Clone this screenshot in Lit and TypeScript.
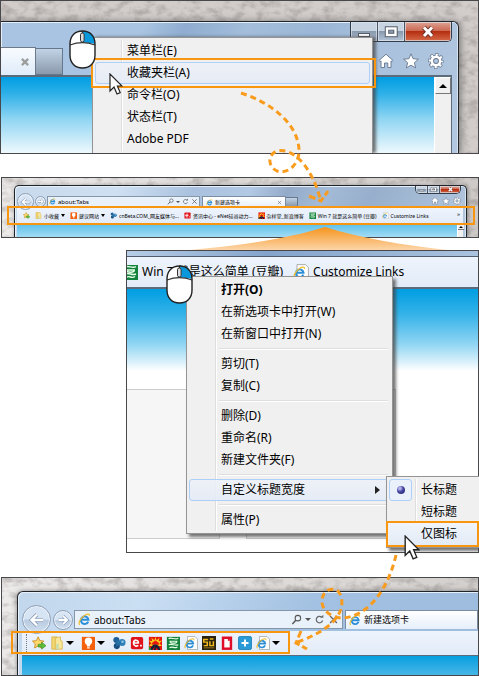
import { LitElement, html, svg, css } from "lit";
import { customElement } from "lit/decorators.js";

const mouse = (cls: string) => html`
  <svg class="mouse ${cls}" viewBox="0 0 27 39" aria-hidden="true">
    <path d="M1 14C1 6 6 1 13.500 1S26 6 26 14v11c0 8-5 13-12.500 13S1 33 1 25Z" fill="#fff"/>
    <path d="M13.500 1C21 1 26 6 26 14c-4-1-8-1.500-12.500-1.500Z" fill="#0a98dc"/>
    <path d="M1 15c8-3 17-3 25 0M13.500 1v3" fill="none" stroke="#333" stroke-width="1.200"/>
    <path d="M1 14C1 6 6 1 13.500 1S26 6 26 14v11c0 8-5 13-12.500 13S1 33 1 25Z" fill="none" stroke="#222" stroke-width="1.400"/>
    <rect x="11.500" y="3" width="3.600" height="9" rx="1.800" fill="#ddd" stroke="#333"/>
  </svg>`;

const cursor = (cls: string) => html`
  <svg class="cursor ${cls}" viewBox="0 0 14 22" aria-hidden="true">
    <path d="M1 1v17l4-4 3 7 3.200-1.400L8.400 13H13Z" fill="#fff" stroke="#222" stroke-width="1.200"/>
  </svg>`;

const eShape = svg`
  <path d="M12.600 10.600A4.700 4.700 0 1 1 12.900 8.300H4.500" fill="none" stroke="#2d8fd8" stroke-width="2.400"/>
  <path d="M2.500 14.300C-.8 13.500 3.500 5.500 8 3c3.500-2.300 6.500-2 5.800.5" fill="none" stroke="#f0bd2c" stroke-width="1.500"/>`;

const shapes: Record<string, unknown> = {
  star: svg`<path d="M7 1l2 4.300 4.600.5-3.400 3.200.9 4.700L7 11.400 2.900 13.700l.9-4.700L.5 5.800 5 5.300Z" fill="#ffd86b" stroke="#c98b1c"/>
    <path d="M7 9.500h4V7l5 4-5 4v-2.500H7Z" fill="#5cbf3a" stroke="#3a8a26" stroke-width=".7"/>`,
  folder: svg`<path d="M2 1h6v14H2Z" fill="#f3d671" stroke="#d2ac3c" stroke-width=".8"/>
    <path d="M6 2l6-1v4l2 1v9H6Z" fill="#fae698" stroke="#d2ac3c" stroke-width=".8"/><path d="M7 9h3v6H7Z" fill="#c8dcae"/>`,
  bulb: svg`<rect x="1" y="1" width="15" height="15" fill="#f4600c"/><circle cx="8.500" cy="6" r="4.200" fill="#fff"/>
    <path d="M6 8h5l-1 4H7ZM7 12.800h3v1.600H7Z" fill="#fff"/>`,
  beta: svg`<circle cx="5" cy="4.500" r="3.500" fill="#1d5f96"/><circle cx="11.500" cy="7.500" r="4" fill="#2f7fb8"/>
    <circle cx="5.500" cy="11.500" r="3.500" fill="#184f80"/><path d="M5 4l6 4-6 4Z" fill="#2772a8"/>
    <circle cx="12" cy="6.500" r="1.500" fill="#8cc3e6"/>`,
  enet: svg`<rect x="1" y="1" width="14" height="14" rx="2" fill="#e0121b"/>
    <path d="M4 8h5.500c.5-4-5.200-4.500-5.500 0 0 4 4 4 5.500 2.800" fill="none" stroke="#fff" stroke-width="1.900"/><path d="M11.500 10h2v2h-2Z" fill="#fff"/>`,
  flower: svg`<rect x="1" y="1" width="15" height="15" fill="#e7180f"/>
    <path d="M8.500 1l1.300 4L13 2l-.8 4L16 5l-3 3.500 3 2.500-4 .5H5L1 11l3-2.500L1 5l3.800 1L4 2l3.200 3Z" fill="#ffd21c"/>
    <path d="M8.500 5l3 2 1.500 3H4l1.500-3Z" fill="#e7180f"/>
    <path d="M3 16c0-8 10-9 11 0h-2.500l-1.500-3-1.500 3H7l.5-4-2.500 4Z" fill="#15203a"/><path d="M1 11l3 5H1Z" fill="#1b9b3a"/>`,
  douban: svg`<rect x="1" y="1" width="15" height="15" fill="#12813a"/>
    <path d="M3 3c3-2 8 2 11-.5M4 6h9M5 6c-2 3 9 3 7 0M3 10c4-2 7 2 11 0M4 13.500c4-3 5 2 9-1" fill="none" stroke="#e9ffe9" stroke-width="1.400"/>`,
  page: svg`<path d="M4 .6h8.500L15.400 3.500v12H4Z" fill="#fff" stroke="#999" stroke-width=".8"/>
    <g transform="translate(0 2) scale(.82)">${eShape}</g>`,
  ie: eShape,
  su: svg`<rect x="0" y="0" width="16" height="16" fill="#2a2310"/>
    <path d="M7 4H2v3h4v4H2M9 6v5h4V6M9 3.500h4" fill="none" stroke="#f0b81c" stroke-width="1.700"/><path d="M2 13.500h12" stroke="#a67c17"/>`,
  red: svg`<rect x="3.500" y="2" width="9" height="12.500" fill="#fff" stroke="#df0d27" stroke-width="2.800"/><path d="M9 3.300h2.200v2.200H9Z" fill="#df0d27"/>`,
  plus: svg`<rect x=".5" y=".5" width="15" height="15" rx="2" fill="#2a9bd6" stroke="#1b7fb5"/><path d="M8 4v8M4 8h8" stroke="#fff" stroke-width="2.200"/>`,
  home: svg`<path d="M8 1.200l7 6.300-1 1.200-1-.8V14.500H9.800V10H6.500v4.500H3V7.900l-1 .8L1 7.500Z" fill="#fff" stroke="#65758c" stroke-width=".9"/>`,
  fav: svg`<path d="M8 .8l2.100 4.900 5.300.5-4 3.500 1.200 5.200L8 12.200l-4.600 2.700 1.200-5.200-4-3.500 5.300-.5Z" fill="#fff" stroke="#65758c" stroke-width=".9"/>`,
  gear: svg`<circle cx="8" cy="8" r="6.300" fill="none" stroke="#65758c" stroke-width="3.400" stroke-dasharray="3 1.948" stroke-dashoffset="1.500"/>
    <circle cx="8" cy="8" r="4.200" fill="none" stroke="#65758c" stroke-width="4.200"/>
    <circle cx="8" cy="8" r="6" fill="none" stroke="#fff" stroke-width="2.600" stroke-dasharray="2 2.712" stroke-dashoffset="1"/>
    <circle cx="8" cy="8" r="4.200" fill="none" stroke="#fff" stroke-width="2.600"/>`,
  search: svg`<circle cx="10" cy="6" r="4" fill="none" stroke="#555" stroke-width="1.500"/><path d="M7 9l-5 5.500" stroke="#555" stroke-width="2"/>`,
  reload: svg`<path d="M12.500 9.500a4.700 4.700 0 1 1-1.500-5" fill="none" stroke="#666" stroke-width="1.700"/><path d="M9 5.500h4.500V1Z" fill="#666"/>`,
  cross: svg`<path d="M3 3l10 10M13 3L3 13" stroke="#666" stroke-width="1.900"/>`,
  shut: svg`<path d="M3 3l10 10M13 3L3 13" stroke="#9c9c9c" stroke-width="3.600"/>`,
  back: svg`<path d="M14 8H3M8 2.500L2.500 8 8 13.500" fill="none" stroke="#8ba0bb" stroke-width="4"/>
    <path d="M14 8H3M8 2.500L2.500 8 8 13.500" fill="none" stroke="#fff" stroke-width="2.400"/>`,
  next: svg`<path d="M2 8h11M8 2.500L13.500 8 8 13.500" fill="none" stroke="#8ba0bb" stroke-width="4"/>
    <path d="M2 8h11M8 2.500L13.500 8 8 13.500" fill="none" stroke="#fff" stroke-width="2.400"/>`,
  min: svg`<rect x="2.500" y="9.500" width="11" height="3" fill="#fff" stroke="#555d69"/>`,
  max: svg`<rect x="4" y="4.500" width="8.500" height="6.500" fill="none" stroke="#555d69" stroke-width="4.400"/><rect x="4" y="4.500" width="8.500" height="6.500" fill="none" stroke="#fff" stroke-width="2.400"/>`,
  close: svg`<path d="M4 3.500l8 8.500M12 3.500L4 12" stroke="#6b3029" stroke-width="4.800"/><path d="M4 3.500l8 8.500M12 3.500L4 12" stroke="#fff" stroke-width="3"/>`,
};

const icon = (name: string, cls = "") => html`<svg class="icon ${cls}" viewBox="0 0 16 16" aria-hidden="true">${shapes[name]}</svg>`;
const caret = html`<i class="caret"></i>`;

const wall = (seed: number) => html`
  <svg class="wall" aria-hidden="true">
    <filter id="grain${seed}" x="0" y="0" width="100%" height="100%" color-interpolation-filters="sRGB">
      <feTurbulence type="fractalNoise" baseFrequency=".09 .14" numOctaves="4" seed="${seed}"/>
      <feColorMatrix values="0 0 0 0 .42  0 0 0 0 .39  0 0 0 0 .38  .8 0 0 0 -.34"/>
    </filter>
    <rect width="100%" height="100%" filter="url(#grain${seed})"/>
  </svg>`;

const captions = html`
  <div class="captions">
    <button aria-label="最小化">${icon("min")}</button><button aria-label="最大化">${icon("max")}</button><button class="shut" aria-label="关闭">${icon("close")}</button>
  </div>`;

const tools = html`
  <div class="tools">
    <button aria-label="主页">${icon("home")}</button><button aria-label="收藏夹">${icon("fav")}</button><button aria-label="工具">${icon("gear")}</button>
  </div>`;

const address = html`
  <button class="round" aria-label="后退">${icon("back")}</button>
  <button class="round small" aria-label="前进">${icon("next")}</button>
  <div class="address">
    ${icon("ie")}
    <input aria-label="地址" .value=${"about:Tabs"}>
    <button aria-label="搜索">${icon("search")}</button>${caret}
    <button aria-label="刷新">${icon("reload")}</button>
    <button aria-label="停止">${icon("cross")}</button>
  </div>`;

const links = [
  { icon: "star" },
  { icon: "folder", text: "小收藏", more: true },
  { icon: "bulb", text: "建议网站", more: true },
  { icon: "beta", text: "cnBeta.COM_网友媒体与..." },
  { icon: "enet", text: "资讯中心 - eNet硅谷动力..." },
  { icon: "flower", text: "杂样堂_新浪博客" },
  { icon: "douban", text: "Win 7 就是这么简单 (豆瓣)" },
  { icon: "page", text: "Customize Links" },
];

const compact = [
  { icon: "star" }, { icon: "folder", more: true }, { icon: "bulb", more: true }, { icon: "beta" }, { icon: "enet" },
  { icon: "flower" }, { icon: "douban" }, { icon: "page" }, { icon: "su" }, { icon: "red" }, { icon: "plus" }, { icon: "page", more: true },
];

const barMenu = ["菜单栏(E)", "收藏夹栏(A)", "命令栏(O)", "状态栏(T)", "Adobe PDF"];
const linkMenu = [
  ["打开(O)", "在新选项卡中打开(W)", "在新窗口中打开(N)"],
  ["剪切(T)", "复制(C)"],
  ["删除(D)", "重命名(R)", "新建文件夹(F)"],
  ["自定义标题宽度"],
  ["属性(P)"],
];

@customElement("app-root")
export class AppRoot extends LitElement {
  static styles = css`
    :host { display: block; position: relative; overflow: hidden; background: #fff; color: #000;
      font: 12px/22px "Noto Sans", "Noto Sans CJK SC", sans-serif; }
    * { box-sizing: border-box; }
    button, input { font: inherit; color: inherit; border: 0; padding: 0; margin: 0; background: none; min-width: 0; }
    a { color: inherit; text-decoration: none; }
    svg { display: block; flex: none; }
    .guide { display: flex; flex-direction: column; }
    .panel { position: relative; border: 1px solid #48484a; display: flex; flex-direction: column; background: #d2cdcb; }
    .crop { position: relative; flex: 1; min-height: 0; overflow: hidden; display: flex; flex-direction: column; }
    .wall { position: absolute; left: 0; top: 0; width: 100%; height: 100%; }
    .one { height: 154px; margin-bottom: 23px; }
    .two { height: 61px; margin: 0 0 12px 1px; background: linear-gradient(90deg, #eceae9, #d9d6d4 60%, #cecac8); }
    .three { height: 303px; margin: 0 0 24px 126px; background: #fff; }
    .four { height: 99px; margin-left: 1px; background: linear-gradient(90deg, #eceae9, #dddad8 60%, #d2cfcd); }

    .window { position: relative; flex: 1; display: flex; flex-direction: column; border: 1px solid #20242b; border-bottom: 0;
      box-shadow: inset 1px 1px #e6f0fa, inset -1px 0 #d5e2f0, 1px 1px 7px 1px #4449;
      background: linear-gradient(115deg, #a9c4e2 0, #a9c4e2 28%, #8fadd0 36%, #a3bddb 48%, #9bb6d6 62%, #a9c1dd 75%, #b3c8e0 100%); }
    .one .window { margin: 20px 19px 0 0; border-left: 0; border-radius: 0 6px 0 0; }
    .two .window { margin: 7px 11px 0 12px; border-radius: 5px 5px 0 0; padding: 0 3px 0 2px; box-shadow: inset 1px 1px #e6f0fa, inset -1px 0 #d5e2f0, 1px 1px 4px #4448;
      background: linear-gradient(115deg, #c9d9ec 0, #cfe0f2 22%, #a9c1de 38%, #b1c9e4 50%, #93abc9 58%, #a4bbd7 66%, #97afcc 76%, #b4c8df 100%); }
    .four .window { margin: 13px 0 0 15px; border-right: 0; border-radius: 6px 0 0 0; padding-left: 4px; box-shadow: inset 1px 1px #e6f0fa, 0 0 5px #4449;
      background: linear-gradient(115deg, #c2d6ec 0, #cbdff3 25%, #b9d2ec 40%, #a3c1e2 60%, #9dbbdc 100%); }

    .captions { position: absolute; top: 0; right: 6px; display: flex; border: 1px solid #333c49; border-top: 0; border-radius: 0 0 5px 5px; overflow: hidden; }
    .captions button { width: 27px; height: 19px; display: grid; place-items: center; border-right: 1px solid #4d5665;
      background: linear-gradient(#c9d4e2 45%, #8999ae 50%, #b5c5d8); box-shadow: inset 0 0 0 1px #dfe8f2aa; }
    .captions .shut { width: 46px; border: 0; background: linear-gradient(#dfa294 0, #cc6a54 45%, #b52e10 50%, #d56a49); }
    .two .captions { right: 5px; border-width: 0 1px 1px; }
    .two .captions button { width: 12px; height: 7px; }
    .two .captions .shut { width: 20px; }
    .icon { width: 16px; height: 16px; }
    .two .icon { width: 8px; height: 8px; }
    .two .captions .icon { width: 7px; height: 7px; }
    .tools { display: flex; gap: 9px; margin-left: auto; padding: 0 14px 6px 0; }
    .two .tools { gap: 3px; padding: 0 2px 2px 0; }

    .tabs { display: flex; align-items: flex-end; height: 53px; }
    .one .tab { width: 35px; height: 28px; border: 1px solid #6c7a8b; border-width: 1px 1px 0 0; background: linear-gradient(#f8fbfe, #dfecfa);
      display: grid; place-items: center end; padding-right: 5px; }
    .one .tab .icon { width: 10px; height: 10px; }
    .fresh { width: 27px; height: 27px; border: 1px solid #66788e; border-width: 1px 1px 1px 0; background: linear-gradient(#c2d3e6, #8a9aac); }
    .view { display: flex; flex: 1; border-top: 2px solid #5c6b7b; }
    .one .view { margin-right: 6px; border-right: 1px solid #5c6b7b; }
    .sky { flex: 1; background: linear-gradient(#009ee2 0, #2fb0e8 22%, #8fd5f3 55%, #fff 82px); }
    .scroll { width: 17px; background: #f0f0f0; border-left: 1px solid #fff; }
    .scroll button { display: grid; place-items: center; width: 16px; height: 17px; background: #f0f0f0; border: 1px solid; border-color: #fff #777 #777 #fff; }
    .scroll button::after { content: ""; border: 4px solid transparent; border-top: 0; border-bottom-color: #000; }
    .two .scroll { width: 6px; }
    .two .scroll button { width: 6px; height: 6px; border-width: 0 0 1px; }
    .two .scroll button::after { border-width: 0 2px 2px; }
    .two .view, .four .view { border-top-width: 1px; }
    .two .sky { background: linear-gradient(#5cc0ea, #a2dbf4); }
    .four .sky { background: linear-gradient(#079fe0, #48b6e7); }

    .nav { display: flex; align-items: center; height: 39px; padding-top: 16px; }
    .round { display: grid; place-items: center; flex: none; width: 29px; height: 29px; border: 1px solid #8da0b8; border-radius: 50%;
      background: linear-gradient(#d7e4f3 48%, #b9cbe0 52%, #d0dfef); box-shadow: inset 0 0 0 1px #eef5fc; position: relative; z-index: 1; }
    .round.small { width: 20px; height: 20px; margin: 0 1px 0 2px; }
    .round.small .icon { width: 12px; height: 12px; }
    .address { display: flex; align-items: center; width: 269px; height: 19px; border: 1px solid #8696a9; background: #e9f1fb; padding: 0 3px; gap: 3px; margin-right: 2px; }
    .address input { flex: 1; font-size: 10px; line-height: 16px; height: 16px; outline: 0; }
    .address .icon { width: 13px; height: 13px; }
    .address button .icon { width: 11px; height: 11px; }
    .pagetab { display: flex; align-items: center; gap: 3px; flex: 1; height: 19px; padding: 0 3px; border: 1px solid #7b8da3; border-bottom: 0;
      background: linear-gradient(#fff, #e6effa); font-size: 9px; line-height: 16px; }
    .pagetab .icon { width: 12px; height: 12px; }
    .caret { flex: none; width: 0; height: 0; border: 4px solid transparent; border-bottom: 0; border-top-color: #000; }
    .address .caret { border-width: 3px 3px 0; border-top-color: #555; }

    .two .nav { height: 22px; padding-top: 9px; }
    .two .round { width: 17px; height: 17px; }
    .two .round .icon { width: 10px; height: 10px; }
    .two .round.small { width: 11px; height: 11px; margin: 0 1px; }
    .two .round.small .icon { width: 7px; height: 7px; }
    .two .address { width: 153px; height: 11px; padding: 0 1px; gap: 2px; }
    .two .address input { font-size: 6px; line-height: 8px; height: 8px; }
    .two .address .icon { width: 7px; height: 7px; }
    .two .address .caret { border-width: 2px 2px 0; }
    .two .pagetab { flex: none; width: 84px; height: 11px; font-size: 5px; line-height: 9px; gap: 2px; }
    .two .pagetab .icon { width: 7px; height: 7px; }
    .two .pagetab button { margin-left: auto; }
    .two .pagetab button .icon { width: 5px; height: 5px; }
    .two .fresh { width: 12px; height: 10px; }

    .bar { display: flex; align-items: center; background: linear-gradient(#eef4fc, #e2ebf8); }
    .bar a { display: flex; align-items: center; white-space: nowrap; }
    .two .bar { height: 15px; padding-left: 6px; gap: 5px; font-size: 5px; line-height: 8px; }
    .two .bar a { gap: 2px; }
    .two .bar .icon { width: 7px; height: 7px; }
    .two .bar .caret { border-width: 3px 2px 0; }
    .two .bar .rest { margin: 0 3px 4px auto; font-size: 6px; }
    .three .bar { height: 31px; border-top: 1px solid #4e5d70; gap: 10px; overflow: hidden; }
    .three .bar a { gap: 4px; }
    .three .bar a:first-child { margin-left: -5px; }
    .four .bar { height: 24px; padding-left: 4px; }
    .four .bar .grip { height: 18px; border-left: 1px dotted #777; margin-right: 5px; }
    .four .bar .links { display: flex; gap: 4px; }
    .four .bar .icon { width: 14px; height: 14px; }
    .four .bar a.more { gap: 2px; margin-right: 3px; }

    .glass { height: 5px; background: linear-gradient(90deg, #b7cde6, #84a4cb 40%, #aac3df); }
    .three .view { flex: none; height: 102px; }
    .three .sky { background: linear-gradient(#009ee2 0, #34b2e8 25%, #8fd5f3 55%, #fff 82px); }
    .boxes { display: flex; gap: 26px; height: 150px; margin-left: -1px; }
    .boxes div { width: 94px; border: 1px solid #ccc; background: #f6f6f6; }
    .boxes div + div { width: 150px; }

    .menu { position: absolute; border: 1px solid #949494; background: #f0f0f0; padding: 2px; box-shadow: 3px 3px 3px #444b; z-index: 2; }
    .menu::before { content: ""; position: absolute; top: 2px; bottom: 2px; left: 28px; border-left: 1px solid #dedede; border-right: 1px solid #fff; }
    .menu button { position: relative; display: flex; align-items: center; width: 100%; height: 22px; padding-left: 31px; border: 1px solid transparent; border-radius: 3px; white-space: nowrap; text-align: left; }
    .menu .hot { border-color: #aecff7; background: linear-gradient(#edf1f8dd, #e4ebf6dd); }
    .menu hr { height: 2px; margin: 3px 2px 3px 30px; border: 0; border-top: 1px solid #dedede; border-bottom: 1px solid #fff; }
    .bars { left: 91px; right: 105px; top: 36px; bottom: 0; border-bottom: 0; box-shadow: 3px 0 3px #444b; }
    .context { left: 59px; top: 25px; width: 207px; }
    .context .lead { font-weight: 700; }
    .context .hot::after { content: ""; margin-left: auto; margin-right: 9px; border: 4px solid transparent; border-right: 0; border-left: 5px solid #222; }
    .sub { left: 259px; right: -1px; top: 225px; border-right: 0; z-index: 3; padding-right: 0; }
    .sub label { position: relative; display: flex; align-items: center; gap: 9px; height: 22px; padding-right: 2px; }
    .sub input { appearance: none; width: 23px; height: 22px; border: 1px solid transparent; border-radius: 3px; display: grid; place-items: center; }
    .sub input:checked { border-color: #aecff7; background: #eaf1fb; }
    .sub input:checked::after { content: ""; width: 8px; height: 8px; border-radius: 50%; background: radial-gradient(circle at 35% 30%, #b9b9ee 10%, #4545a0 45%, #22226a); }
    .sub .pick { background: linear-gradient(#f1f5fb, #e2eaf6); }

    .ring { position: absolute; border: 2px solid #f8960f; z-index: 3; pointer-events: none; }
    .ring.a { left: 90px; right: 102px; top: 57px; height: 30px; }
    .ring.b { left: 5px; right: 3px; top: 28px; height: 19px; }
    .ring.c { left: 259px; right: -1px; top: 270px; height: 26px; }
    .ring.d { left: 9px; width: 279px; top: 53px; height: 23px; }
    .mouse { position: absolute; width: 27px; height: 39px; z-index: 4; }
    .mouse.m1 { left: 68px; top: 29px; }
    .mouse.m2 { left: 39px; top: 14px; }
    .cursor { position: absolute; width: 14px; height: 22px; z-index: 5; }
    .cursor.c1 { left: 108px; top: 72px; }
    .cursor.c2 { left: 277px; top: 284px; width: 16px; height: 25px; }
    .trail { position: absolute; left: 0; top: 0; width: 479px; height: 676px; z-index: 6; pointer-events: none; fill: none; stroke: #f99b1c; stroke-width: 3; }
  `;

  render() {
    return html`
      <main class="guide">
        <section class="panel one">
          <div class="crop">
            ${wall(3)}
            <div class="window">
              ${captions}
              <div class="tabs">
                <button class="tab" aria-label="关闭选项卡">${icon("shut")}</button>
                <button class="fresh" aria-label="新选项卡"></button>
                ${tools}
              </div>
              <div class="view"><div class="sky"></div><div class="scroll"><button aria-label="向上滚动"></button></div></div>
            </div>
            <div class="menu bars" role="menu">
              ${barMenu.map((t, i) => html`<button role="menuitem" class=${i === 1 ? "hot" : ""}>${t}</button>`)}
            </div>
          </div>
          <div class="ring a"></div>
          ${mouse("m1")}${cursor("c1")}
        </section>

        <section class="panel two">
          <div class="crop">
            ${wall(8)}
            <div class="window">
              ${captions}
              <div class="nav">
                ${address}
                <div class="pagetab">${icon("ie")}<span>新建选项卡</span><button aria-label="关闭选项卡">${icon("cross")}</button></div>
                <button class="fresh" aria-label="新选项卡"></button>
                ${tools}
              </div>
              <nav class="bar">
                ${links.map((l) => html`<a href="#">${icon(l.icon)}${l.text ? html`<span>${l.text}</span>` : ""}${l.more ? caret : ""}</a>`)}
                <span class="rest">»</span>
              </nav>
              <div class="view"><div class="sky"></div><div class="scroll"><button aria-label="向上滚动"></button></div></div>
            </div>
          </div>
          <div class="ring b"></div>
        </section>

        <section class="panel three">
          <div class="crop">
            <div class="glass"></div>
            <nav class="bar">
              ${links.slice(6).map((l) => html`<a href="#">${icon(l.icon)}<span>${l.text}</span></a>`)}
            </nav>
            <div class="view"><div class="sky"></div></div>
            <div class="boxes"><div></div><div></div></div>
          </div>
          <div class="menu context" role="menu">
            ${linkMenu.map((group, g) => html`${g ? html`<hr>` : ""}${group.map((t, i) => html`
              <button role="menuitem" class=${g === 3 ? "hot" : g === 0 && i === 0 ? "lead" : ""}>${t}</button>`)}`)}
          </div>
          <div class="menu sub">
            <label><input type="radio" name="width" checked>长标题</label>
            <label><input type="radio" name="width">短标题</label>
            <label class="pick"><input type="radio" name="width">仅图标</label>
          </div>
          <div class="ring c"></div>
          ${mouse("m2")}${cursor("c2")}
        </section>

        <section class="panel four">
          <div class="crop">
            ${wall(5)}
            <div class="window">
              <div class="nav">
                ${address}
                <div class="pagetab">${icon("ie")}<span>新建选项卡</span></div>
              </div>
              <nav class="bar">
                <i class="grip"></i>
                <div class="links">
                  ${compact.map((l) => html`<a href="#" class=${l.more ? "more" : ""} aria-label=${l.icon}>${icon(l.icon)}${l.more ? caret : ""}</a>`)}
                </div>
              </nav>
              <div class="view"><div class="sky"></div></div>
            </div>
          </div>
          <div class="ring d"></div>
        </section>
      </main>

      <svg class="trail" viewBox="0 0 479 676" aria-hidden="true">
        <defs><linearGradient id="fan" x1="0" y1="0" x2="0" y2="1"><stop offset="0" stop-color="#f5941d"/><stop offset="1" stop-color="#fdd5a8"/></linearGradient></defs>
        <path d="M325 227C290 238 245 245 190 250H447C402 245 360 238 325 227Z" fill="url(#fan)" stroke="none"/>
        <path d="M241 93C272 103 300 125 299 153C297 168 285 174 277 171C267 166 268 154 277 151C296 147 313 172 320 198" stroke-dasharray="6 4"/>
        <path d="M309 196l12 5 7-10" stroke-dasharray="7 3"/>
        <path d="M396 555C388 590 368 616 343 618C330 618 321 609 322 600C323 588 337 585 341 596C347 618 322 633 298 642" stroke-dasharray="6 4"/>
        <path d="M301 631l-5 12 11 6" stroke-dasharray="7 3"/>
      </svg>
    `;
  }
}
